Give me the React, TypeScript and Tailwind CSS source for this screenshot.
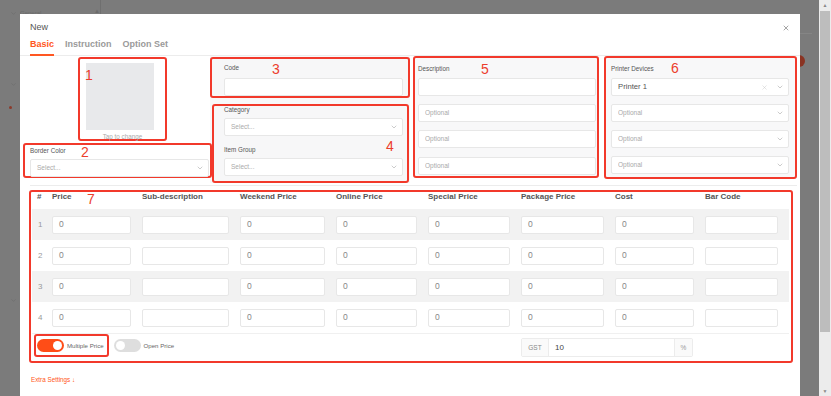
import { ChevronDown, X } from 'lucide-react'
import clsx from 'clsx'
import type { ReactNode } from 'react'

const font = "font-['Liberation_Sans',Arial,sans-serif]"

type MarkProps = {
  n: string
  pos: string
  className?: string
  children?: ReactNode
}

// red annotation frame with its number
const Mark = ({ n, pos, className, children }: MarkProps) => (
  <div className={clsx('relative rounded-[3px] border-2 border-[#f2392b]', className)}>
    {children}
    <span className={clsx('absolute text-[14px] leading-[14px] text-[#ec3d2c]', pos)}>{n}</span>
  </div>
)

const Label = ({ children, className }: { children: ReactNode; className?: string }) => (
  <div className={clsx('text-[6.3px] leading-[8px] text-[#555]', className)}>{children}</div>
)

type FieldProps = {
  placeholder?: string
  value?: string
  select?: boolean
  clear?: boolean
  className?: string
}

const Field = ({ placeholder, value, select, clear, className }: FieldProps) => (
  <div
    className={clsx(
      'flex h-[18px] items-center rounded-[2px] border border-[#e7e7e7] bg-white pl-[6px] pr-[4px]',
      className
    )}
  >
    <span className="flex-1 truncate text-[6.5px] leading-[8px] text-[#aaa]">
      {value ? <span className="text-[7.7px] text-[#555]">{value}</span> : placeholder}
    </span>
    {clear && <X size={7} strokeWidth={1.5} className="mr-[8px] text-[#c4c4c4]" />}
    {select && <ChevronDown size={8} strokeWidth={1.5} className="text-[#999]" />}
  </div>
)

const cols = 'grid grid-cols-[20px_90px_98px_96px_92px_93px_94px_90px_84px]'

const heads = [
  '#',
  'Price',
  'Sub-description',
  'Weekend Price',
  'Online Price',
  'Special Price',
  'Package Price',
  'Cost',
  'Bar Code',
]

const Cell = ({ value }: { value?: string }) => (
  <div className="mr-[11px] flex h-[18px] items-center rounded-[2px] border border-[#e7e7e7] bg-white pl-[6px] text-[8.5px] text-[#888]">
    {value}
  </div>
)

const Toggle = ({ on }: { on?: boolean }) => (
  <div
    className={clsx(
      'flex h-[13px] w-[27px] items-center rounded-full px-[2px]',
      on ? 'justify-end bg-[#ff4d17]' : 'justify-start bg-[#dedede]'
    )}
  >
    <div className="h-[9px] w-[9px] rounded-full bg-white" />
  </div>
)

const Backdrop = () => (
  <div className="absolute inset-0 text-[#6a6a6a]">
    <div className="absolute left-[10px] top-[9px] flex items-center gap-[3px] text-[6px]">
      <ChevronDown size={7} />
      <span>General</span>
    </div>
    <div className="absolute left-[94px] top-[7px] text-[6px]">▲</div>
    <div className="absolute left-[100px] top-0 h-[14px] w-px bg-[#6f6f6f]" />
    <ChevronDown size={7} className="absolute left-[10px] top-[81px]" />
    <div className="absolute left-[9px] top-[106px] h-[3px] w-[3px] rounded-full bg-[#8c3a2a]" />
    <ChevronDown size={7} className="absolute left-[10px] top-[297px]" />
    <div className="absolute left-[797px] top-[55px] h-[12px] w-[8px] rounded-r-full bg-[#8a3322]" />
    <div className="absolute left-[800px] top-[33px] h-px w-[12px] bg-[#858585]" />
  </div>
)

const Scrollbar = () => (
  <div className="flex h-full w-[12px] flex-col items-center bg-[#ececec]">
    <div className="mt-[2px] text-[5px] leading-[6px] text-[#888]">▲</div>
    <div className="mt-[3px] h-[321px] w-[10px] bg-[#bdbdbd]" />
    <div className="mb-[2px] mt-auto text-[5px] leading-[6px] text-[#888]">▼</div>
  </div>
)

export default function App() {
  return (
    <div className={clsx('flex h-[396px] w-[831px] overflow-hidden bg-[#7b7b7b]', font)}>
      <div className="relative flex-1">
        <Backdrop />
        <div className="absolute bottom-0 left-[20px] top-[14px] w-[780px] bg-white">
          {/* header */}
          <div className="flex items-start justify-between pl-[10px] pr-[10px] pt-[8px]">
            <div className="text-[9px] leading-[11px] text-[#555]">New</div>
            <X size={8} strokeWidth={2} className="mt-[2px] text-[#777]" />
          </div>
          <div className="mt-[6px] flex h-[17px] items-start gap-[11px] border-b border-[#ececec] pl-[10px] text-[9px] font-bold leading-[11px]">
            <div className="h-[17px] border-b-2 border-[#ff5722] text-[#ff5722]">Basic</div>
            <div className="text-[#9a9a9a]">Instruction</div>
            <div className="text-[#9a9a9a]">Option Set</div>
          </div>

          {/* basic fields */}
          <div className="flex items-start pl-[3px]">
            <div className="w-[187px]">
              <Mark n="1" pos="left-[5px] top-[9px]" className="ml-[55px] mt-[1px] h-[84px] w-[89px]">
                <div className="ml-[6px] mt-[4px] h-[67px] w-[68px] bg-[#e8e9eb]" />
                <div className="mt-[3px] text-center text-[6.3px] leading-[8px] text-[#aaa]">
                  Tap to change
                </div>
              </Mark>
              <Mark n="2" pos="left-[56px] top-0" className="mt-[2px] h-[35px] w-[189px]">
                <Label className="pl-[5px] pt-[2px]">Border Color</Label>
                <Field placeholder="Select..." select className="ml-[5px] mt-[4px] w-[179px]" />
              </Mark>
            </div>

            <div className="w-[200px] bg-[#f8f8f9]">
              <Mark n="3" pos="left-[60px] top-[3px]" className="mt-[1px] h-[41px] bg-[#f7f7f8]">
                <Label className="pl-[12px] pt-[5px]">Code</Label>
                <Field className="ml-[12px] mt-[6px] w-[179px]" />
              </Mark>
              <Mark n="4" pos="left-[172px] top-[33px]" className="ml-[2px] mt-[6px] h-[79px] w-[197px] bg-[#f7f7f8]">
                <Label className="pl-[10px]">Category</Label>
                <Field placeholder="Select..." select className="ml-[10px] mt-[4px] w-[179px]" />
                <Label className="pl-[10px] pt-[10px]">Item Group</Label>
                <Field placeholder="Select..." select className="ml-[10px] mt-[4px] w-[179px]" />
              </Mark>
            </div>

            <Mark n="5" pos="left-[66px] top-[4px]" className="ml-[3px] h-[122px] w-[186px] bg-[#f8f8f9]">
              <div className="flex flex-col gap-[8px] pl-[3px]">
                <div>
                  <Label className="pt-[7px]">Description</Label>
                  <Field className="mt-[5px] w-[178px]" />
                </div>
                <Field placeholder="Optional" className="w-[178px]" />
                <Field placeholder="Optional" className="w-[178px]" />
                <Field placeholder="Optional" className="mt-[1px] w-[178px]" />
              </div>
            </Mark>

            <Mark n="6" pos="left-[65px] top-[3px]" className="ml-[5px] h-[123px] w-[193px] bg-[#f8f8f9]">
              <div className="flex flex-col gap-[8px] pl-[5px]">
                <div>
                  <Label className="pt-[7px]">Printer Devices</Label>
                  <Field value="Printer 1" select clear className="mt-[5px] w-[178px]" />
                </div>
                <Field placeholder="Optional" select className="w-[178px]" />
                <Field placeholder="Optional" select className="w-[178px]" />
                <Field placeholder="Optional" select className="w-[178px]" />
              </div>
            </Mark>
          </div>

          <div className="ml-[10px] mr-[3px] mt-[2px] h-px bg-[#ececec]" />

          {/* price table */}
          <Mark n="7" pos="left-[56px] top-0" className="ml-[9px] mt-[4px] h-[173px] w-[764px]">
            <div className="pl-px pr-[2px]">
              <div className={clsx(cols, 'h-[17px] text-[8px] font-bold leading-[10px] text-[#555]')}>
                {heads.map((h, i) => (
                  <div key={h} className={i === 0 ? 'pl-[5px]' : ''}>
                    {h}
                  </div>
                ))}
              </div>
              {[1, 2, 3, 4].map((r) => (
                <div
                  key={r}
                  className={clsx(cols, 'h-[31px] items-center', r % 2 === 1 ? 'bg-[#f2f2f2]' : 'bg-white')}
                >
                  <div className="pl-[6px] text-[8px] text-[#999]">{r}</div>
                  <Cell value="0" />
                  <Cell />
                  <Cell value="0" />
                  <Cell value="0" />
                  <Cell value="0" />
                  <Cell value="0" />
                  <Cell value="0" />
                  <Cell />
                </div>
              ))}
              <div className={clsx(cols, 'h-[28px] items-start border-t border-[#f0f0f0]')}>
                <div className="col-span-6 flex items-center">
                  <div className="ml-[2px] flex h-[23px] items-center gap-[3px] rounded-[3px] border-2 border-[#f2392b] pl-px pr-[3px]">
                    <Toggle on />
                    <span className="text-[6.1px] text-[#666]">Multiple Price</span>
                  </div>
                  <div className="ml-[5px] flex items-center gap-[3px]">
                    <Toggle />
                    <span className="text-[6.1px] text-[#666]">Open Price</span>
                  </div>
                </div>
                <div className="col-span-2 mr-[12px] mt-[4px] flex h-[19px] rounded-[2px] border border-[#ececec] text-[6.5px]">
                  <div className="flex w-[27px] items-center justify-center border-r border-[#ececec] bg-[#fafafa] text-[#888]">
                    GST
                  </div>
                  <div className="flex flex-1 items-center pl-[6px] text-[8px] text-[#444]">10</div>
                  <div className="flex w-[18px] items-center justify-center border-l border-[#ececec] bg-[#fafafa] text-[#999]">
                    %
                  </div>
                </div>
              </div>
            </div>
          </Mark>

          <div className="mt-[13px] pl-[11px] text-[6.3px] leading-[8px] text-[#ff5722]">Extra Settings ↓</div>
        </div>
      </div>
      <Scrollbar />
    </div>
  )
}
